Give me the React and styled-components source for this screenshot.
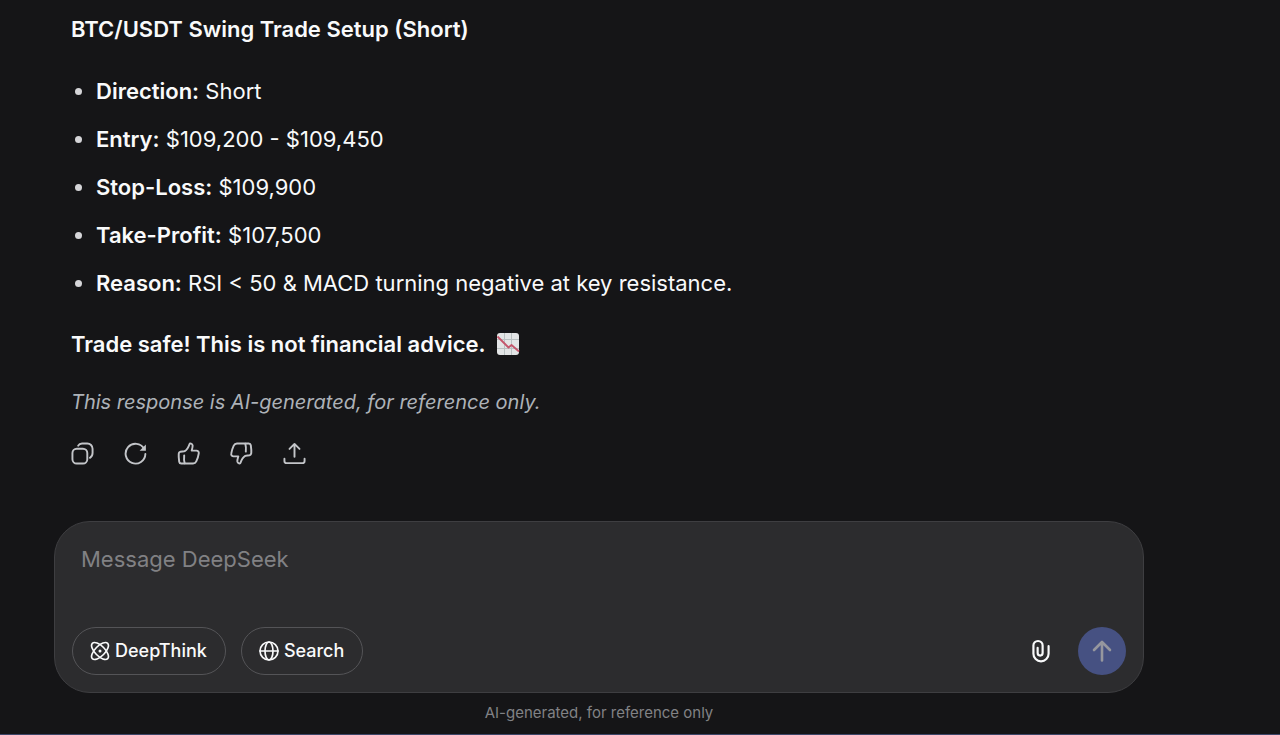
import React from "react";
import styled, { createGlobalStyle } from "styled-components";

const GlobalStyle = createGlobalStyle`
  * { box-sizing: border-box; }
  body {
    margin: 0;
    background: #151517;
    color: #f9fafb;
    font-family: Inter, "Liberation Sans", sans-serif;
    -webkit-font-smoothing: antialiased;
  }
  button { font: inherit; color: inherit; cursor: pointer; }
`;

const Page = styled.main`
  display: flex;
  flex-direction: column;
  min-height: 100vh;
  padding: 10px 136px 0 54px;
  border-bottom: 1px solid #3c4568;
`;

const Answer = styled.article`
  padding: 0 17px;
  font-size: 22px;
  line-height: 38px;
`;

const Title = styled.h3`
  margin: 0 0 24px;
  font-size: 22px;
  font-weight: 600;
`;

const Facts = styled.ul`
  display: flex;
  flex-direction: column;
  gap: 10px;
  margin: 0 0 23px;
  padding: 0 0 0 25px;
  li::marker { color: #d5d5d8; }
`;

const Label = styled.strong`
  font-weight: 600;
`;

const Closing = styled.p`
  display: flex;
  align-items: center;
  gap: 10px;
  margin: 0 0 23px;
  font-weight: 600;
`;

const Disclaimer = styled.p`
  margin: 0;
  color: #adb2b8;
  font-size: 20px;
  font-style: italic;
  line-height: 32px;
`;

const Actions = styled.div`
  display: flex;
  gap: 30px;
  margin-top: 24px;
`;

const IconButton = styled.button`
  display: flex;
  padding: 0;
  border: 0;
  background: none;
  color: ${(p) => p.$color || "#c3c5c9"};
`;

const Composer = styled.form`
  display: flex;
  flex-direction: column;
  justify-content: space-between;
  min-height: 172px;
  margin-top: 56px;
  padding: 18px 17px 17px;
  border: 1px solid #3e3e41;
  border-radius: 36px;
  background: #2c2c2e;
`;

const MessageBox = styled.textarea`
  display: block;
  width: 100%;
  height: 38px;
  padding: 0 9px;
  border: 0;
  outline: 0;
  resize: none;
  background: none;
  color: #f9fafb;
  font: 400 22px/38px Inter, "Liberation Sans", sans-serif;
  &::placeholder { color: #818184; opacity: 1; }
`;

const Toolbar = styled.div`
  display: flex;
  align-items: center;
  gap: 15px;
`;

const Pill = styled.button`
  display: flex;
  align-items: center;
  gap: 5px;
  height: 48px;
  padding: 0 18px 0 17px;
  border: 1px solid #545457;
  border-radius: 24px;
  background: none;
  font-size: 18px;
  font-weight: 500;
  line-height: 24px;
`;

const SendGroup = styled.div`
  display: flex;
  align-items: center;
  gap: 24px;
  margin-left: auto;
`;

const Send = styled.button`
  display: flex;
  align-items: center;
  justify-content: center;
  width: 48px;
  height: 48px;
  padding: 0;
  border: 0;
  border-radius: 50%;
  background: #465182;
  color: #96979e;
`;

const Footer = styled.footer`
  padding-top: 10px;
  color: #818285;
  font-size: 15px;
  line-height: 20px;
  text-align: center;
`;

const Svg = ({ size = 24, stroke = 2, children }) => (
  <svg
    width={size}
    height={size}
    viewBox="0 0 24 24"
    fill="none"
    stroke="currentColor"
    strokeWidth={stroke}
    strokeLinecap="round"
    strokeLinejoin="round"
    aria-hidden="true"
  >
    {children}
  </svg>
);

const ChartDown = () => (
  <svg width="24" height="24" viewBox="0 0 24 24" role="img" aria-label="Chart decreasing">
    <rect x="1" y="1" width="22" height="22" rx="3" fill="#e3e5e6" />
    <path d="M8.500 1v22M15.500 1v22M1 7.500h22M1 16.500h22" stroke="#b9c0c1" strokeWidth="1" />
    <path d="M1.500 4.500L12.500 15.500l3-2.500 7.500 6.500" fill="none" stroke="#c4566c" strokeWidth="1.800" strokeLinejoin="round" />
  </svg>
);

const facts = [
  ["Direction:", "Short"],
  ["Entry:", "$109,200 - $109,450"],
  ["Stop-Loss:", "$109,900"],
  ["Take-Profit:", "$107,500"],
  ["Reason:", "RSI < 50 & MACD turning negative at key resistance."],
];

const actions = [
  ["Copy", (
    <>
      <rect x="1.500" y="7" width="15.500" height="15.500" rx="4.500" />
      <path d="M7.500 3.800C8.300 2.300 9.800 1.500 11.500 1.500h5.500a5.500 5.500 0 0 1 5.500 5.500v4.500c0 2.300-1 4-2.700 5" />
    </>
  )],
  ["Regenerate", (
    <>
      <path d="M21 7.200A10.300 10.300 0 1 0 22.300 12.500" />
      <path d="M22.800 2.500v6.500h-6.500z" fill="currentColor" stroke="none" />
    </>
  )],
  ["Like", (
    <>
      <path d="M2.800 10.500C4 9.300 6.600 10.300 8.100 9.500 10.500 8.200 12.200 4.700 13 2.300c.4-1.200 3-.8 3.300 1.200.2 1.700-.5 3.800-1 5.500h5c1.500 0 2.700 1.300 2.400 2.800-.4 3-1.300 5.800-2.600 8.500-.7 1.500-1.800 2.200-3.400 2.200H4.500c-1.200 0-2-.7-2.200-1.900-.4-2.700-.7-5.700-.5-8.300.1-.8.400-1.300 1-1.800z" />
      <path d="M7.500 14c-.3 2.800-.2 5.700.5 8.300" />
    </>
  )],
  ["Dislike", (
    <>
      <path d="M21.200 13.500c-1.200 1.200-3.800.2-5.300 1-2.400 1.300-4.100 4.800-4.900 7.200-.4 1.200-3 .8-3.300-1.200-.2-1.700.5-3.800 1-5.500h-5c-1.500 0-2.700-1.300-2.400-2.800.4-3 1.300-5.800 2.600-8.500.7-1.500 1.800-2.200 3.400-2.200h12.200c1.200 0 2 .7 2.200 1.900.4 2.700.7 5.700.5 8.300-.1.800-.4 1.300-1 1.800z" />
      <path d="M16.500 10c.3-2.800.2-5.700-.5-8.300" />
    </>
  )],
  ["Share", (
    <>
      <path d="M12 15.500V2M6.800 7.200L12 2l5.200 5.200" />
      <path d="M1.500 17.500v2.200c0 1.400.9 2.300 2.300 2.300h16.400c1.400 0 2.300-.9 2.300-2.300v-2.200" />
    </>
  )],
];

export default function App() {
  return (
    <>
      <GlobalStyle />
      <Page>
        <Answer>
          <Title>BTC/USDT Swing Trade Setup (Short)</Title>
          <Facts>
            {facts.map(([label, value]) => (
              <li key={label}>
                <Label>{label}</Label> {value}
              </li>
            ))}
          </Facts>
          <Closing>
            Trade safe! This is not financial advice.
            <ChartDown />
          </Closing>
          <Disclaimer>This response is AI-generated, for reference only.</Disclaimer>
          <Actions>
            {actions.map(([name, art]) => (
              <IconButton key={name} type="button" aria-label={name}>
                <Svg size={23}>{art}</Svg>
              </IconButton>
            ))}
          </Actions>
        </Answer>
        <Composer onSubmit={(e) => e.preventDefault()}>
          <MessageBox rows={1} aria-label="Message DeepSeek" placeholder="Message DeepSeek" />
          <Toolbar>
            <Pill type="button">
              <Svg size={20}>
                <ellipse cx="12" cy="12" rx="13" ry="6" transform="rotate(45 12 12)" />
                <ellipse cx="12" cy="12" rx="13" ry="6" transform="rotate(-45 12 12)" />
                <circle cx="12" cy="12" r="1.800" fill="currentColor" stroke="none" />
              </Svg>
              DeepThink
            </Pill>
            <Pill type="button">
              <Svg size={20}>
                <circle cx="12" cy="12" r="10.800" />
                <ellipse cx="12" cy="12" rx="4.800" ry="10.800" />
                <path d="M1.200 12h21.600" />
              </Svg>
              Search
            </Pill>
            <SendGroup>
              <IconButton type="button" aria-label="Attach file" $color="#f9fafb">
                <Svg size={26}>
                  <path d="M8.900 9v4.900a2.300 2.300 0 0 0 4.600 0V7a4.250 4.250 0 0 0-8.500 0v7.500a7 7 0 0 0 14 0V7.500" />
                </Svg>
              </IconButton>
              <Send type="submit" aria-label="Send">
                <Svg size={24} stroke={2.6}>
                  <path d="M12 21.500V3M4 11l8-8 8 8" />
                </Svg>
              </Send>
            </SendGroup>
          </Toolbar>
        </Composer>
        <Footer>AI-generated, for reference only</Footer>
      </Page>
    </>
  );
}
